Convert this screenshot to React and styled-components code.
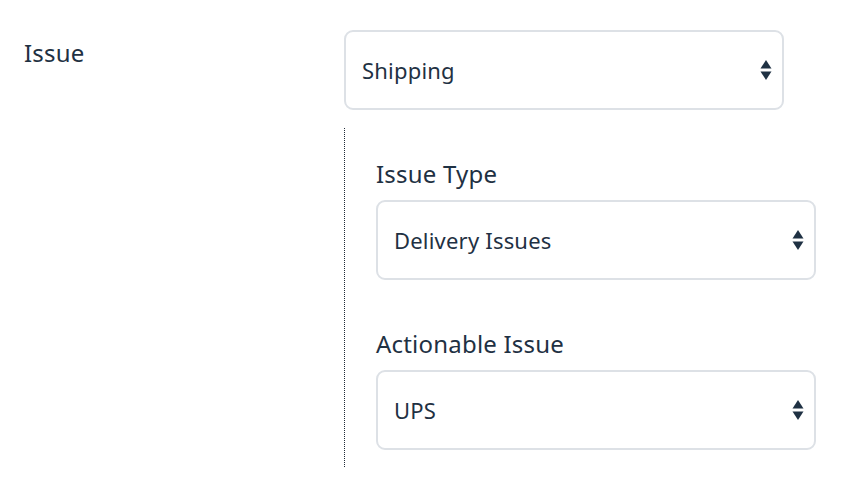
import React from "react";
import styled, { createGlobalStyle } from "styled-components";

const Global = createGlobalStyle`
  html, body { margin: 0; padding: 0; background: #fff; }
  body { font-family: "Noto Sans", "Open Sans", sans-serif; color: #1f3143; }
`;

const Page = styled.div`
  padding: 30px 0 0 24px;
  display: flex;
`;

const SideLabel = styled.div`
  width: 320px;
  font-size: 24px;
  font-weight: 400;
  line-height: 1;
  padding-top: 11px;
  letter-spacing: 0.2px;
`;

const Column = styled.div`
  width: 440px;
  display: flex;
  flex-direction: column;
`;

const SelectBox = styled.div`
  box-sizing: border-box;
  width: 440px;
  height: 80px;
  border: 2px solid #dde1e6;
  border-radius: 9px;
  display: flex;
  align-items: center;
  justify-content: space-between;
  padding: 0 10px 0 16px;
  font-size: 22px;
  font-weight: 400;
  letter-spacing: 0.2px;
  background: #fff;
`;

const Nested = styled.div`
  margin-top: 18px;
  border-left: 1.5px dotted #1f2a36;
  padding: 31px 0 17px 31px;
  display: flex;
  flex-direction: column;
`;

const Field = styled.div`
  display: flex;
  flex-direction: column;
  margin-top: ${(p) => (p.$first ? "0" : "49px")};
`;

const FieldLabel = styled.div`
  font-size: 24px;
  font-weight: 400;
  line-height: 30px;
  margin-bottom: 11px;
  letter-spacing: 0.2px;
`;

const Arrows = () => (
  <svg width="12" height="22" viewBox="0 0 12 22">
    <polygon points="6,1 11.5,9.5 0.5,9.5" fill="#1f3143" />
    <polygon points="0.5,12.5 11.5,12.5 6,21" fill="#1f3143" />
  </svg>
);

const Select = ({ value }) => (
  <SelectBox>
    <span>{value}</span>
    <Arrows />
  </SelectBox>
);

export default function App() {
  return (
    <>
      <Global />
      <Page>
        <SideLabel>Issue</SideLabel>
        <Column>
          <Select value="Shipping" />
          <Nested>
            <Field $first>
              <FieldLabel>Issue Type</FieldLabel>
              <Select value="Delivery Issues" />
            </Field>
            <Field>
              <FieldLabel>Actionable Issue</FieldLabel>
              <Select value="UPS" />
            </Field>
          </Nested>
        </Column>
      </Page>
    </>
  );
}
